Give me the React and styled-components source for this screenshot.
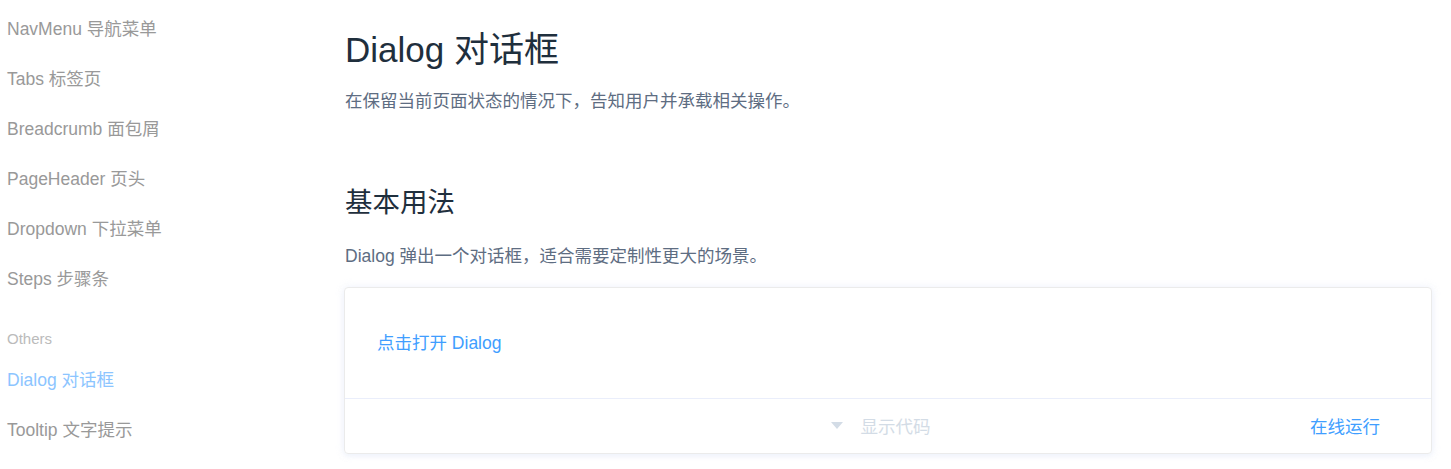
import React from 'react';
import styled, { createGlobalStyle } from 'styled-components';

const GlobalStyle = createGlobalStyle`
  body {
    margin: 0;
    background: #fff;
    font-family: "Liberation Sans", Arial, "Noto Sans CJK SC", sans-serif;
  }
`;

const App = () => {
  return (
    <>
      <GlobalStyle />
      <Page>
        <Sidebar>
          <NavItem>NavMenu 导航菜单</NavItem>
          <NavItem>Tabs 标签页</NavItem>
          <NavItem>Breadcrumb 面包屑</NavItem>
          <NavItem>PageHeader 页头</NavItem>
          <NavItem>Dropdown 下拉菜单</NavItem>
          <NavItem>Steps 步骤条</NavItem>
          <GroupTitle>Others</GroupTitle>
          <NavItem active>Dialog 对话框</NavItem>
          <NavItem>Tooltip 文字提示</NavItem>
        </Sidebar>
        <Main>
          <Title>Dialog 对话框</Title>
          <Lead>在保留当前页面状态的情况下，告知用户并承载相关操作。</Lead>
          <SectionTitle>基本用法</SectionTitle>
          <SectionDesc>Dialog 弹出一个对话框，适合需要定制性更大的场景。</SectionDesc>
          <DemoCard>
            <DemoSource>
              <TextButton>点击打开 Dialog</TextButton>
            </DemoSource>
            <DemoControl>
              <span />
              <ToggleCode>
                <Caret />
                <span>显示代码</span>
              </ToggleCode>
              <RunLink>在线运行</RunLink>
            </DemoControl>
          </DemoCard>
        </Main>
      </Page>
    </>
  );
};

export default App;

const Page = styled.div`
  display: flex;
  width: 1451px;
  height: 469px;
  overflow: hidden;
`;

const Sidebar = styled.ul`
  width: 344px;
  flex-shrink: 0;
  margin: 0;
  padding: 4px 0 0 7px;
  box-sizing: border-box;
  list-style: none;
`;

const NavItem = styled.li`
  height: 50px;
  line-height: 50px;
  font-size: 17.5px;
  color: ${(p) => (p.active ? '#8cc5ff' : '#999')};
  white-space: nowrap;
`;

const GroupTitle = styled.li`
  margin-top: 19px;
  line-height: 32px;
  font-size: 15px;
  color: #bbb;
`;

const Main = styled.div`
  flex: 1;
  padding: 24px 19px 0 0;
  min-width: 0;
`;

const Title = styled.h2`
  margin: 0;
  font-size: 35px;
  font-weight: 400;
  line-height: 52px;
  color: #1f2f3d;
  padding-left: 1px;
`;

const Lead = styled.p`
  margin: 12px 0 0;
  font-size: 17.5px;
  line-height: 26px;
  color: #5e6d82;
  padding-left: 1px;
`;

const SectionTitle = styled.h3`
  margin: 69px 0 0;
  font-size: 27.5px;
  font-weight: 400;
  line-height: 40px;
  color: #1f2f3d;
  padding-left: 1px;
`;

const SectionDesc = styled.p`
  margin: 20px 0 0;
  font-size: 17.5px;
  line-height: 26px;
  color: #5e6d82;
  padding-left: 1px;
`;

const DemoCard = styled.div`
  margin-top: 18px;
  border: 1px solid #ebebeb;
  border-radius: 4px;
  box-shadow: 0 0 10px 0 rgba(232, 237, 250, 0.6), 0 2px 5px 0 rgba(232, 237, 250, 0.5);
`;

const DemoSource = styled.div`
  padding: 28px 32px 32px;
  border-bottom: 1px solid #eaeefb;
`;

const TextButton = styled.button`
  display: block;
  height: 50px;
  padding: 0;
  border: 0;
  background: transparent;
  font-family: inherit;
  font-size: 17.5px;
  color: #409eff;
  cursor: pointer;
`;

const DemoControl = styled.div`
  display: grid;
  grid-template-columns: 1fr auto 1fr;
  align-items: center;
  height: 53px;
  padding-bottom: 1px;
  font-size: 17.5px;
`;

const ToggleCode = styled.div`
  display: flex;
  align-items: center;
  gap: 18px;
  color: #d3dce6;
  margin-left: -15px;
`;

const Caret = styled.i`
  width: 0;
  height: 0;
  border-left: 6px solid transparent;
  border-right: 6px solid transparent;
  border-top: 7px solid #d3dce6;
`;

const RunLink = styled.span`
  justify-self: end;
  padding-right: 51px;
  color: #409eff;
`;
